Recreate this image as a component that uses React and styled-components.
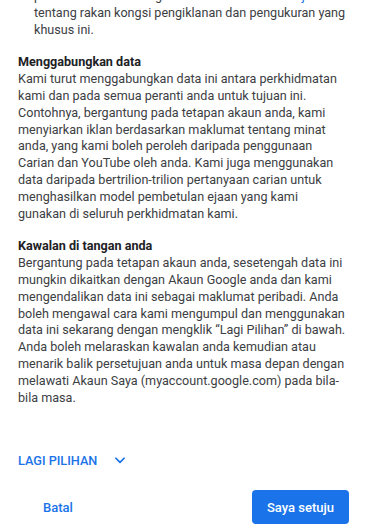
import React from 'react';
import styled, { createGlobalStyle } from 'styled-components';

const GlobalStyle = createGlobalStyle`
  html, body {
    margin: 0;
    padding: 0;
    background: #ffffff;
  }
  body {
    font-family: Roboto, "Liberation Sans", Arial, sans-serif;
  }
`;

const Page = styled.div`
  width: 368px;
  height: 530px;
  display: flex;
  flex-direction: column;
  background: #fff;
`;

const Scroller = styled.div`
  flex: 1;
  min-height: 0;
  overflow: hidden;
  padding: 0 21px 0 18px;
`;

// the dialog body is shown scrolled down by a few pixels
const Content = styled.div`
  margin-top: -12px;
`;

const List = styled.ul`
  margin: 0;
  padding-left: 16px;
  list-style: disc;
`;

const Item = styled.li`
  font-size: 12.6px;
  line-height: 16.8px;
  color: #3c4043;
`;

const Link = styled.a`
  color: #1a73e8;
  text-decoration: none;
`;

const Section = styled.section`
  margin-top: 16px;
`;

const Heading = styled.h3`
  margin: 0;
  font-size: 12.6px;
  line-height: 16.8px;
  font-weight: 700;
  color: #202124;
`;

const Text = styled.p`
  margin: 0;
  font-size: 12.6px;
  line-height: 16.8px;
  color: #3c4043;
`;

const Footer = styled.div`
  padding: 0 19px 6px 18px;
  display: flex;
  flex-direction: column;
`;

const MoreButton = styled.button`
  align-self: flex-start;
  display: flex;
  align-items: center;
  gap: 16px;
  border: none;
  background: none;
  padding: 0;
  height: 36px;
  font-family: Roboto, "Liberation Sans", Arial, sans-serif;
  font-size: 12.7px;
  font-weight: 500;
  color: #1a73e8;
  text-transform: uppercase;
  cursor: pointer;
`;

const Actions = styled.div`
  display: flex;
  justify-content: space-between;
  align-items: center;
  margin-top: 12px;
`;

const Button = styled.button`
  height: 34px;
  padding: 0 ${p => (p.primary ? '15px' : '25px')};
  border: none;
  border-radius: 4px;
  font-family: Roboto, "Liberation Sans", Arial, sans-serif;
  font-size: 13px;
  font-weight: 500;
  background: ${p => (p.primary ? '#1a73e8' : 'transparent')};
  color: ${p => (p.primary ? '#ffffff' : '#1a73e8')};
  cursor: pointer;
`;

const Chevron = () => (
  <svg width="14" height="14" viewBox="0 0 24 24" fill="none" stroke="#1a73e8" strokeWidth="3" strokeLinecap="round" strokeLinejoin="round">
    <polyline points="5,9 12,16 19,9" />
  </svg>
);

export default function App() {
  return (
    <Page>
      <GlobalStyle />
      <Scroller>
        <Content>
          <List>
            <Item>
              perkhidmatan kami digunakan. <Link href="#">Ketahui lebih lanjut</Link>{' '}
              tentang rakan kongsi pengiklanan dan pengukuran yang khusus ini.
            </Item>
          </List>
          <Section>
            <Heading>Menggabungkan data</Heading>
            <Text>
              Kami turut menggabungkan data ini antara perkhidmatan kami dan pada semua peranti anda untuk tujuan ini.
              Contohnya, bergantung pada tetapan akaun anda, kami menyiarkan iklan berdasarkan maklumat tentang minat
              anda, yang kami boleh peroleh daripada penggunaan Carian dan YouTube oleh anda. Kami juga menggunakan data
              daripada bertrilion-trilion pertanyaan carian untuk menghasilkan model pembetulan ejaan yang kami gunakan di
              seluruh perkhidmatan kami.
            </Text>
          </Section>
          <Section>
            <Heading>Kawalan di tangan anda</Heading>
            <Text>
              Bergantung pada tetapan akaun anda, sesetengah data ini mungkin dikaitkan dengan Akaun Google anda dan kami
              mengendalikan data ini sebagai maklumat peribadi. Anda boleh mengawal cara kami mengumpul dan menggunakan
              data ini sekarang dengan mengklik “Lagi Pilihan” di bawah. Anda boleh melaraskan kawalan anda kemudian atau
              menarik balik persetujuan anda untuk masa depan dengan melawati Akaun Saya (myaccount.google.com) pada
              bila-bila masa.
            </Text>
          </Section>
        </Content>
      </Scroller>
      <Footer>
        <MoreButton>
          Lagi pilihan
          <Chevron />
        </MoreButton>
        <Actions>
          <Button>Batal</Button>
          <Button primary>Saya setuju</Button>
        </Actions>
      </Footer>
    </Page>
  );
}
